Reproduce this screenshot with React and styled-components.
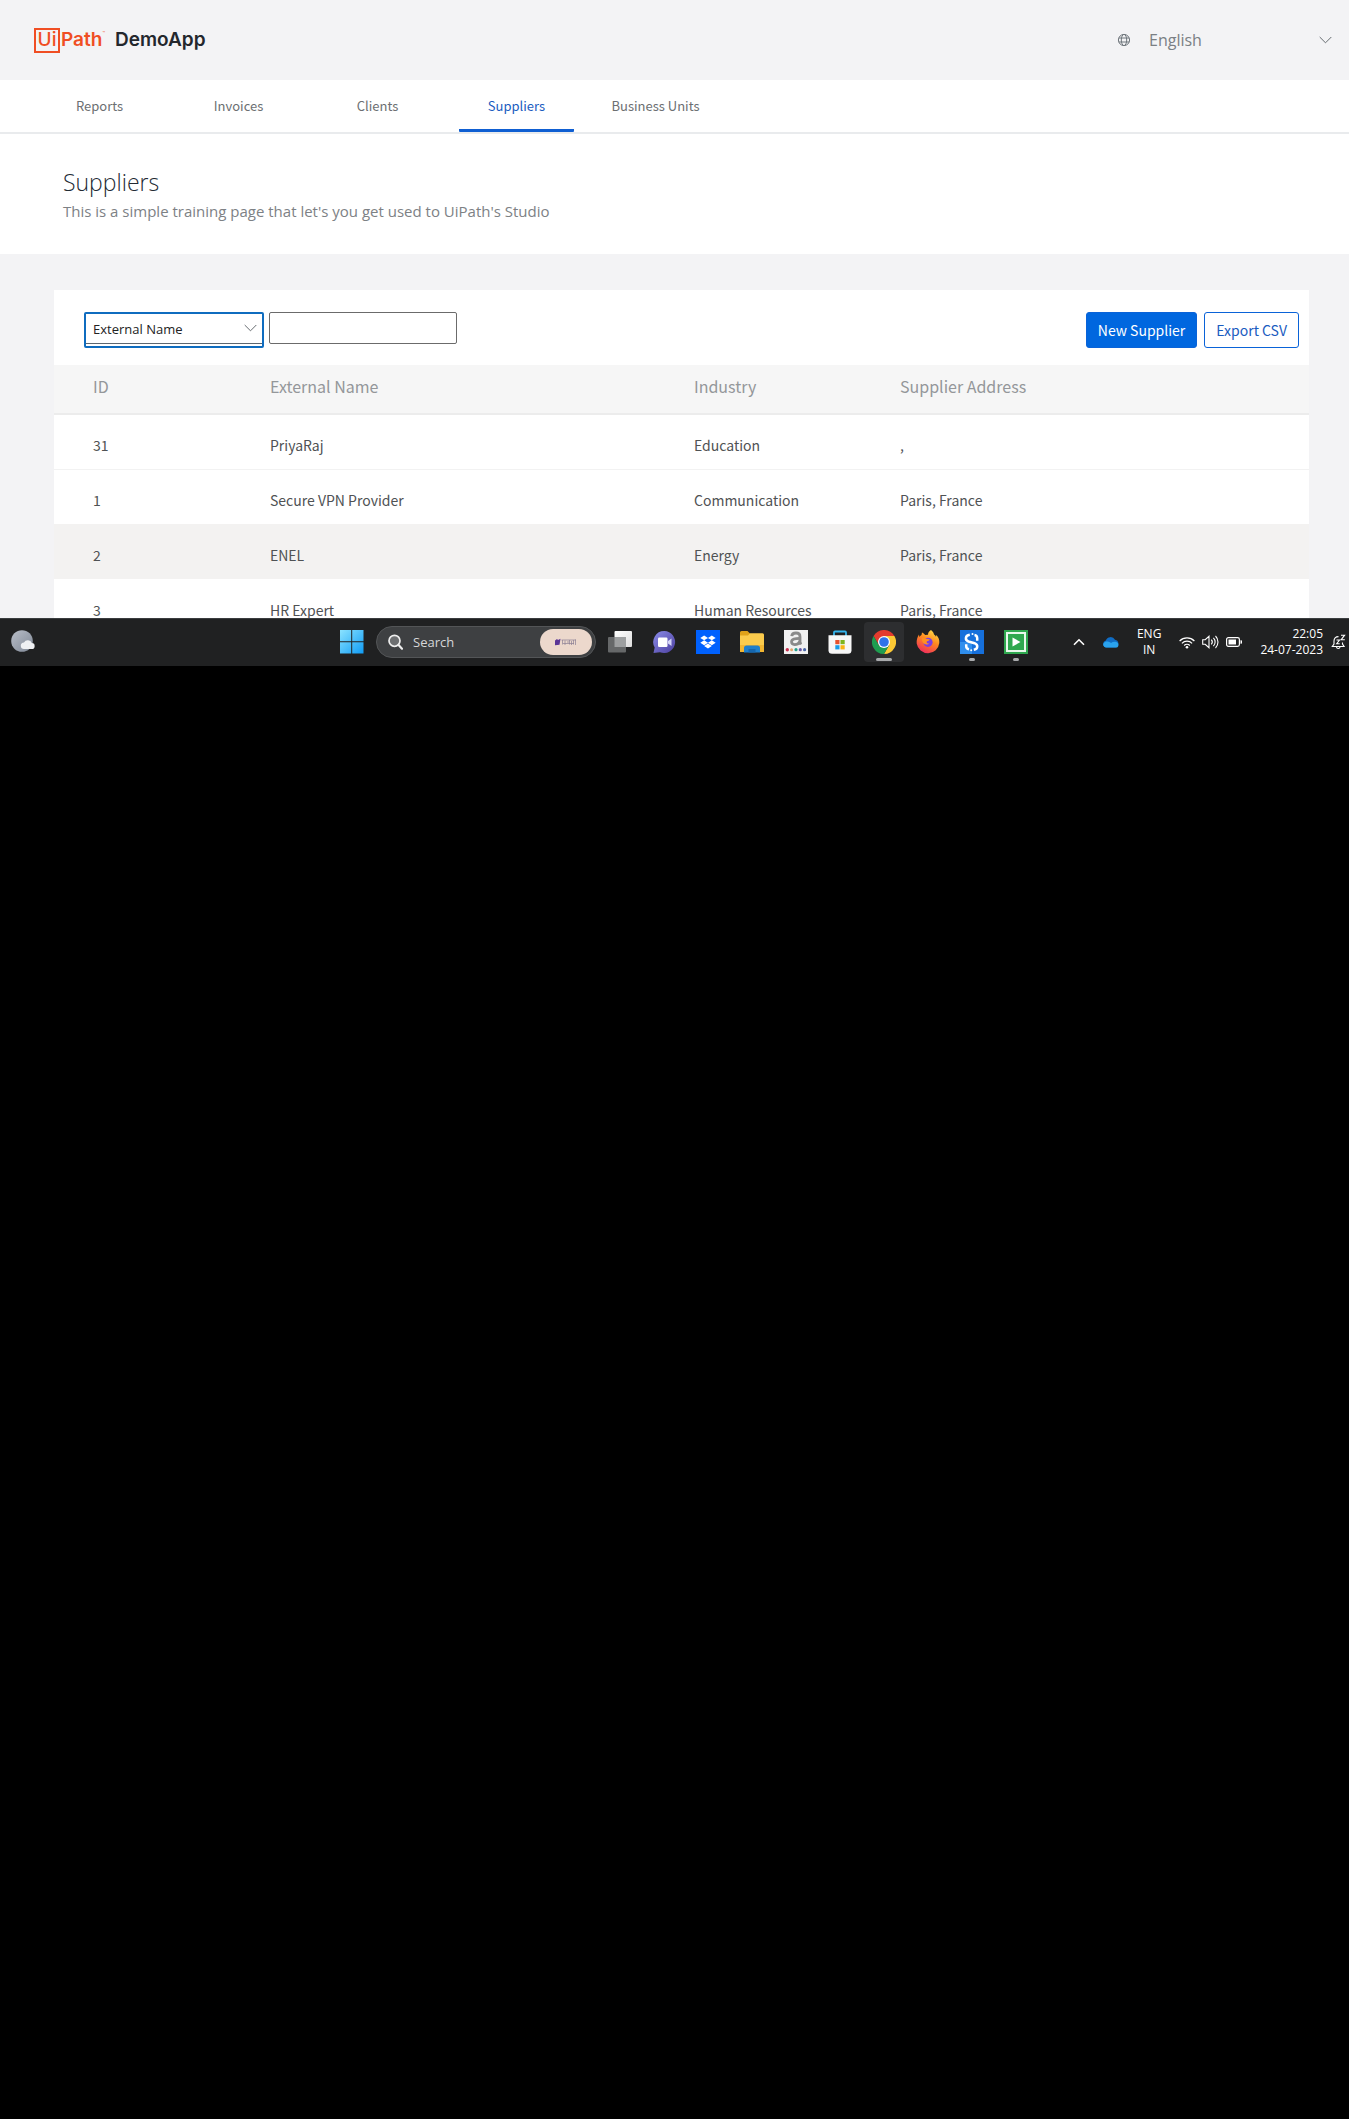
import React from "react";
import styled, { createGlobalStyle, css } from "styled-components";

const sans = `"Noto Sans CJK SC", "Noto Sans", sans-serif`;
const system = `"Open Sans", "Noto Sans", sans-serif`;

const GlobalStyle = createGlobalStyle`
  *, *::before, *::after { box-sizing: border-box; }
  html, body { margin: 0; background: #000; }
  body { font-family: ${sans}; }
`;

const Page = styled.div`
  background: #f3f3f5;
`;

const Header = styled.header`
  display: flex;
  align-items: center;
  justify-content: space-between;
  height: 80px;
  padding: 0 17px 0 34px;
`;

const Brand = styled.a`
  display: flex;
  align-items: center;
  font-family: Inter, ${sans};
  color: #23272d;
  text-decoration: none;
`;

const LogoBox = styled.span`
  display: flex;
  align-items: center;
  justify-content: center;
  width: 26px;
  height: 25px;
  border: 2px solid #f04e23;
  color: #f04e23;
  font-size: 19px;
  line-height: 20px;
  font-weight: 500;
`;

const LogoWord = styled.span`
  display: flex;
  width: 46px;
  padding-left: 1px;
  color: #f04e23;
  font-size: 19px;
  line-height: 24px;
  font-weight: 600;
`;

const TradeMark = styled.sup`
  font-size: 4px;
  line-height: 12px;
`;

const AppName = styled.span`
  margin-left: 9px;
  font-size: 19px;
  line-height: 24px;
  font-weight: 600;
`;

const Language = styled.div`
  display: flex;
  align-items: center;
  gap: 18px;
  color: #6f767c;
`;

const SelectWrap = styled.div`
  position: relative;
  display: flex;
`;

const SelectArrow = styled.svg`
  position: absolute;
  top: ${(p) => (p.$framed ? "10px" : "calc(50% - 4px)")};
  right: ${(p) => (p.$framed ? 5 : 0)}px;
  pointer-events: none;
`;

const LanguageSelect = styled.select`
  appearance: none;
  width: 183px;
  padding: 0;
  border: 0;
  background: transparent;
  color: #7a7f84;
  font: 16px/24px ${system};
`;

const Nav = styled.nav`
  display: flex;
  gap: 24px;
  height: 54px;
  padding-left: 42px;
  background: #fff;
  border-bottom: 2px solid #e9ebed;
`;

const Tab = styled.a`
  display: flex;
  align-items: center;
  justify-content: center;
  width: 115px;
  padding-top: 3px;
  border-bottom: 3px solid ${(p) => (p.$active ? "#0f5fd2" : "transparent")};
  border-radius: 1px;
  color: ${(p) => (p.$active ? "#1a5cc0" : "#6c6f72")};
  font-size: 13px;
  line-height: 20px;
  text-decoration: none;
`;

const Intro = styled.section`
  padding: 31px 63px 31px;
  background: #fff;
  font-family: ${system};
`;

const Title = styled.h1`
  margin: 0;
  color: #222a33;
  font-size: 23px;
  line-height: 34px;
  font-weight: 300;
`;

const Subtitle = styled.p`
  margin: 0;
  color: #7d8185;
  font-size: 15px;
  line-height: 24px;
`;

const Content = styled.main`
  padding: 36px 40px 0 54px;
`;

const Card = styled.section`
  background: #fff;
`;

const Toolbar = styled.div`
  display: flex;
  align-items: flex-start;
  justify-content: space-between;
  padding: 22px 10px 17px 30px;
`;

const Group = styled.div`
  display: flex;
  align-items: ${(p) => p.$align || "flex-start"};
  gap: ${(p) => p.$gap}px;
`;

const FilterFrame = styled(SelectWrap)`
  width: 180px;
  height: 36px;
  padding-bottom: 2px;
  border: 2px solid #0f6cbf;
  border-radius: 2px;
`;

const FilterSelect = styled.select`
  appearance: none;
  width: 100%;
  padding: 0 28px 0 7px;
  border: 0;
  border-bottom: 1px solid #5c6670;
  border-radius: 0;
  outline: 0;
  background: #fff;
  color: #222;
  font: 13px/24px ${system};
`;

const FilterInput = styled.input`
  width: 188px;
  height: 32px;
  padding: 0 8px;
  border: 1px solid #6b6b6b;
  border-radius: 2px;
  font: 13px/24px ${system};
`;

const Button = styled.button`
  height: 36px;
  padding: 0 11px;
  border: 1px solid #0a63d8;
  border-radius: 3px;
  background: ${(p) => (p.$primary ? "#0067df" : "#fff")};
  color: ${(p) => (p.$primary ? "#fff" : "#1a5cc0")};
  font: 14px/24px ${sans};
  white-space: nowrap;
`;

const Table = styled.table`
  width: 100%;
  table-layout: fixed;
  border-collapse: collapse;
  text-align: left;
`;

const Column = styled.col`
  width: ${(p) => (p.$width ? `${p.$width}px` : "auto")};
`;

const cell = css`
  padding: 0;
  white-space: nowrap;
  &:first-child { padding-left: 39px; }
`;

const HeadCell = styled.th`
  ${cell}
  height: 49px;
  && { padding-bottom: 7px; }
  border-bottom: 2px solid #ececec;
  background: #f6f6f6;
  color: #94979a;
  font-size: 16px;
  line-height: 24px;
  font-weight: 400;
`;

const Row = styled.tr`
  background: ${(p) => (p.$shaded ? "#f3f2f1" : "#fff")};
  border-bottom: 1px solid ${(p) => (p.$lined ? "#f2f2f2" : "transparent")};
`;

const Cell = styled.td`
  ${cell}
  height: 55px;
  padding-top: 6px;
  color: #4f5254;
  font-size: 14px;
  line-height: 24px;
`;

const Taskbar = styled.footer`
  position: relative;
  display: grid;
  grid-template-columns: 332px auto 1fr;
  align-items: center;
  height: 48px;
  margin-top: -17px;
  border-top: 1px solid #3a3d3f;
  background: #202122;
  color: #fff;
  font-family: ${system};
`;

const Widget = styled.button`
  display: flex;
  width: 40px;
  padding: 0 0 0 11px;
  border: 0;
  background: transparent;
`;

const Pins = styled.div`
  display: flex;
  align-items: center;
  gap: 4px;
`;

const Pin = styled.button`
  position: relative;
  display: flex;
  align-items: center;
  justify-content: center;
  width: 40px;
  height: 40px;
  padding: 0;
  border: 0;
  border-radius: 4px;
  background: ${(p) => (p.$mark === "active" ? "#2d2e30" : "transparent")};
  ${(p) =>
    p.$mark &&
    css`
      &::after {
        content: "";
        position: absolute;
        bottom: 1px;
        left: 50%;
        width: ${p.$mark === "active" ? 16 : 6}px;
        height: 3px;
        border-radius: 2px;
        background: #a9abad;
        transform: translateX(-50%);
      }
    `}
`;

const SearchPill = styled.label`
  display: flex;
  align-items: center;
  width: 220px;
  height: 32px;
  padding: 0 3px 0 11px;
  border: 1px solid #535557;
  border-radius: 16px;
  background: #3e4042;
`;

const SearchInput = styled.input`
  flex: 1;
  min-width: 0;
  margin-left: 10px;
  padding: 0;
  border: 0;
  outline: 0;
  background: transparent;
  color: #fff;
  font: 13px/20px ${system};
  &::placeholder { color: #d6d7d8; opacity: 1; }
`;

const Tray = styled.div`
  display: flex;
  align-items: center;
  justify-content: flex-end;
  gap: 18px;
  padding-right: 3px;
`;

const TrayText = styled.div`
  font-size: 12px;
  line-height: 16px;
  text-align: ${(p) => p.$align};
`;

const Globe = () => (
  <svg width="14" height="14" viewBox="0 0 14 14" fill="none" stroke="currentColor" strokeWidth="1">
    <circle cx="7" cy="7" r="5.6" />
    <ellipse cx="7" cy="7" rx="2.7" ry="5.6" />
    <path d="M1.9 5h10.2M1.9 9h10.2" />
  </svg>
);

const Arrow = ({ framed }) => (
  <SelectArrow $framed={framed} width="13" height="8" viewBox="0 0 13 8" fill="none" stroke="#666b70">
    <path d="M.7 1 6.5 6.8 12.3 1" />
  </SelectArrow>
);

const Weather = () => (
  <svg width="24" height="24" viewBox="0 0 24 24">
    <defs>
      <linearGradient id="moon" x1="0" y1="0" x2="1" y2="1">
        <stop offset="0" stopColor="#b9bec8" />
        <stop offset="1" stopColor="#7f8896" />
      </linearGradient>
    </defs>
    <circle cx="11" cy="11" r="10.8" fill="url(#moon)" />
    <path d="M13.2 19a3.3 3.3 0 0 1-.2-6.6 4.3 4.3 0 0 1 7.8.6 3 3 0 0 1-.3 6z" fill="#eef0f3" />
  </svg>
);

const WindowsLogo = () => (
  <svg width="24" height="24" viewBox="0 0 24 24">
    <defs>
      <linearGradient id="win" x1="0" y1="0" x2="1" y2="1">
        <stop offset="0" stopColor="#8be3ff" />
        <stop offset="1" stopColor="#109cf5" />
      </linearGradient>
    </defs>
    <path d="M0 0h11.2v11.2H0zM12.2 0h11.3v11.2H12.2zM0 12.2h11.2v11.3H0zM12.2 12.2h11.3v11.3H12.2z" fill="url(#win)" />
  </svg>
);

const Magnifier = () => (
  <svg width="15" height="16" viewBox="0 0 15 16" fill="#6d6f71" stroke="#eee" strokeWidth="1.7" strokeLinecap="round">
    <circle cx="6.5" cy="6.8" r="5.5" />
    <path d="m10.6 11 3.4 3.7" strokeWidth="2.2" />
  </svg>
);

const SearchBadge = () => (
  <svg width="52" height="26" viewBox="0 0 52 26">
    <rect width="52" height="26" rx="13" fill="#ecd8cc" />
    <path d="M15 11.5 17 10l1 1 2.5-1.3-1 6-4.5.6z" fill="#5a3596" />
    <path
      d="M21.500 11h14.500M22.500 11v4.500M25 11.500v4.500M27 13h2M29.500 11v4.500M31.500 12v4M33.500 11v4.500M35.500 10.500V16M23 14.500h11"
      fill="none"
      stroke="#8b7f93"
      strokeWidth=".7"
    />
  </svg>
);

const TaskView = () => (
  <svg width="24" height="24" viewBox="0 0 24 24">
    <defs>
      <linearGradient id="tv" x1="0" y1="0" x2="1" y2="1">
        <stop offset="0" stopColor="#fff" />
        <stop offset="1" stopColor="#ddd" />
      </linearGradient>
    </defs>
    <rect x="6.500" y="1" width="17.500" height="16" rx="1" fill="url(#tv)" />
    <rect x="0" y="7" width="18" height="15.500" rx="1" fill="#666869" />
    <path d="M6.500 7H18v10H6.500z" fill="#9d9fa0" />
  </svg>
);

const Chat = () => (
  <svg width="24" height="24" viewBox="0 0 24 24">
    <defs>
      <linearGradient id="chat" x1="0" y1="0" x2="1" y2="1">
        <stop offset="0" stopColor="#8a8be8" />
        <stop offset="1" stopColor="#4c3f9e" />
      </linearGradient>
    </defs>
    <path d="M12.500 1A11 11 0 1 1 8 22.200L1.500 23l1.200-5.500A11 11 0 0 1 12.500 1z" fill="url(#chat)" />
    <rect x="6" y="7.500" width="9.500" height="9.500" rx="1.200" fill="#fff" />
    <path d="m16 11 3.500-2.500v7.500L16 13.500z" fill="#d6d6f7" />
  </svg>
);

const Dropbox = () => (
  <svg width="24" height="24" viewBox="0 0 24 24">
    <path d="M0 0h24v24H0z" fill="#0061fe" />
    <g transform="translate(4.300 4.300) scale(.64)" fill="#fff">
      <path d="M6 1.807 0 5.629l6 3.822 6.001-3.822zM18 1.807l-6 3.822 6 3.822 6-3.822zM0 13.274l6 3.822 6.001-3.822L6 9.452zM18 9.452l-6 3.822 6 3.822 6-3.822zM6 18.371l6.001 3.822 6-3.822-6-3.822z" />
    </g>
  </svg>
);

const Folder = () => (
  <svg width="26" height="24" viewBox="0 0 26 24">
    <path d="M1 2.500A1.500 1.500 0 0 1 2.500 1h6l2.500 2.500V8H1z" fill="#e0a21a" />
    <path d="M1 5.500h8l2-2.300h12.500A1.500 1.500 0 0 1 25 4.700V22H1z" fill="#fbcb4c" />
    <path d="M1 15h24v7H1z" fill="#f2b632" />
    <path d="M5 22.500V18a2.500 2.500 0 0 1 2.500-2.500h11A2.500 2.500 0 0 1 21 18v4.500z" fill="#1f7fcb" />
    <path d="M9.500 19h7v3.500h-7z" fill="#1566ae" />
  </svg>
);

const AmazonMusic = () => (
  <svg width="24" height="24" viewBox="0 0 24 24">
    <path d="M0 0h24v24H0z" fill="#f1f1f1" />
    <path d="M7.700 6.200C8 3.800 9.800 3 12 3c2.700 0 4 1.300 4 3.700v7.800" fill="none" stroke="#8a8a8a" strokeWidth="2.800" />
    <path d="M16 8.300c-5 0-8.500.5-8.500 3.500 0 3.700 6 3.700 8 .2l1.500 2.300" fill="none" stroke="#8a8a8a" strokeWidth="2.700" />
    <circle cx="3.300" cy="19.700" r="1.700" fill="#c93050" />
    <circle cx="7.600" cy="19.700" r="1.500" fill="#e3a76c" />
    <circle cx="12" cy="19.700" r="1.600" fill="#23a18c" />
    <circle cx="16.300" cy="19.700" r="1.600" fill="#6858a8" />
    <circle cx="20.600" cy="19.700" r="1.600" fill="#4967a8" />
  </svg>
);

const Store = () => (
  <svg width="24" height="24" viewBox="0 0 24 24">
    <path d="M6 6V2.500a1 1 0 0 1 1-1h10a1 1 0 0 1 1 1V6" fill="none" stroke="#35b5ee" strokeWidth="1.800" />
    <path d="M.5 5.200h23v15a3.500 3.500 0 0 1-3.500 3.500H4a3.500 3.500 0 0 1-3.500-3.500z" fill="#f7f7f7" />
    <path d="M7.300 10h4.200v4.200H7.300z" fill="#e8512c" />
    <path d="M12.500 10h4.200v4.200h-4.200z" fill="#7db51c" />
    <path d="M7.300 15.200h4.200v4.200H7.300z" fill="#1a9ce8" />
    <path d="M12.500 15.200h4.200v4.200h-4.200z" fill="#f8b414" />
  </svg>
);

const Chrome = () => (
  <svg width="24" height="24" viewBox="0 0 24 24">
    <path d="M12 6h10.400A12 12 0 0 1 12 24l5.200-9z" fill="#fcc934" />
    <path d="M1.600 6A12 12 0 0 1 22.400 6H12v3l-5.200 6z" fill="#e33b2e" />
    <path d="M1.600 6A12 12 0 0 0 12 24l5.200-9-5.200 2-5.200-2z" fill="#1f9d50" />
    <circle cx="12" cy="12" r="6" fill="#fff" />
    <circle cx="12" cy="12" r="4.800" fill="#2f73e8" />
  </svg>
);

const Firefox = () => (
  <svg width="24" height="24" viewBox="0 0 24 24">
    <defs>
      <linearGradient id="fox" x1=".8" y1="0" x2=".3" y2="1">
        <stop offset="0" stopColor="#ffe14a" />
        <stop offset=".45" stopColor="#ff8a1f" />
        <stop offset="1" stopColor="#ef2b5d" />
      </linearGradient>
    </defs>
    <path
      d="M15 0c2 1.500 2.800 3 3 4.500 1 .5 1.700 1.300 2 2.200l.4-1.700C22.800 7.500 23.500 10 23.300 13A11.400 11.400 0 0 1 .7 13.500C.4 10 1.300 7 3 4.500L3.400 7C4 6 4.800 5.300 5.500 5L6 2.500C7.500 3.300 8.600 4 9 5l3-.3C12 2.800 13 1 15 0z"
      fill="url(#fox)"
    />
    <circle cx="12" cy="12.300" r="4.600" fill="#7b3fe0" />
    <path d="M5.500 8.500c2-.8 4-.5 5.500.5 1 .2 2 .1 2.700.2-.2 1.300-1.700 1.800-3 2.200-.4 1.300.8 2.200 2.500 2-1.200 1.800-5.700 1.400-6.700-1.600z" fill="#ff8f22" />
  </svg>
);

const StudioIcon = () => (
  <svg width="24" height="24" viewBox="0 0 24 24" fill="none" stroke="#fff" strokeWidth="2.500">
    <path d="M0 0h24v24H0z" fill="#1670dc" stroke="none" />
    <path d="M0 12h12v12H0z" fill="#2f8eed" stroke="none" />
    <path d="M9.800 4.800C5 5.500 4.700 10.200 8.500 11.500L14.500 13.200C18.500 14.800 18 19 13.800 19.800" />
    <path d="M17.200 10.800V8a3.200 3.200 0 0 0-2.700-2.900M6.200 14.200V16a3.300 3.300 0 0 0 2.800 3.300" />
    <circle cx="12.500" cy="4" r="1" fill="#fff" stroke="none" />
    <circle cx="11.200" cy="20.200" r="1" fill="#fff" stroke="none" />
  </svg>
);

const AssistantIcon = () => (
  <svg width="24" height="24" viewBox="0 0 24 24">
    <path d="M0 0h24v24H0z" fill="#2fa84f" />
    <rect x="3" y="3" width="18" height="18" fill="none" stroke="#e9f8ec" strokeWidth="2" />
    <path d="m8.500 7.500 8 4.500-8 4.500z" fill="#fff" />
  </svg>
);

const ChevronUp = () => (
  <svg width="12" height="8" viewBox="0 0 12 8" fill="none" stroke="#fff" strokeWidth="1.600">
    <path d="m1 6.800 5-5 5 5" />
  </svg>
);

const Cloud = () => (
  <svg width="16" height="12" viewBox="0 0 16 12">
    <path d="M3.500 11.500A3.500 3.500 0 0 1 2.800 4.600 5 5 0 0 1 12 3.800a4 4 0 0 1 .8 7.700z" fill="#0f6cc4" />
    <path d="M3 11.500a2.800 2.800 0 0 1-2-4.700c2-2 5-1.200 7 .2 2-1.500 5-1.700 7 .2.900 1.500.5 4.300-2 4.300z" fill="#2aa3ee" />
  </svg>
);

const Wifi = () => (
  <svg width="16" height="13" viewBox="0 0 16 13" fill="none" stroke="#fff" strokeWidth="1.200">
    <path d="M.6 5a10.400 10.400 0 0 1 14.800 0M2.900 7.300a7.200 7.200 0 0 1 10.200 0M5.200 9.500a4 4 0 0 1 5.600 0" />
    <circle cx="8" cy="11.300" r="1.300" fill="#fff" stroke="none" />
  </svg>
);

const Volume = () => (
  <svg width="17" height="14" viewBox="0 0 17 14" fill="none" stroke="#fff" strokeWidth="1.100">
    <path d="M.7 4.700v4.600h2.500L7 12.700V1.300L3.200 4.700zM9.300 4.700a3.400 3.400 0 0 1 0 4.600M11.400 2.800a6 6 0 0 1 0 8.400M13.500 1a8.500 8.500 0 0 1 0 12" />
  </svg>
);

const Battery = () => (
  <svg width="16" height="10" viewBox="0 0 16 10">
    <rect x=".6" y=".6" width="12.800" height="8.800" rx="1.800" fill="none" stroke="#fff" strokeWidth="1.200" />
    <rect x="2.500" y="2.500" width="7.500" height="5" fill="#fff" />
    <path d="M14.500 3.200h.7a.8.800 0 0 1 .8.800v2a.8.800 0 0 1-.8.800h-.7z" fill="#fff" />
  </svg>
);

const SnoozeBell = () => (
  <svg width="15" height="16" viewBox="0 0 15 16" fill="none" stroke="#fff" strokeWidth="1.100">
    <path d="M7.500 2.600C4.500 2.600 3 4.600 3 7v3L1.300 12.500h11.800L11.500 10V8.500M5.500 13c.3 2 3.200 2 3.500 0" />
    <path d="M5.500 6h3L5.700 9.700h3M10 1.200h3.600L10.200 5.700h3.600" />
  </svg>
);

const tabs = ["Reports", "Invoices", "Clients", "Suppliers", "Business Units"];

const suppliers = [
  { id: 31, name: "PriyaRaj", industry: "Education", address: ",", lined: true },
  { id: 1, name: "Secure VPN Provider", industry: "Communication", address: "Paris, France" },
  { id: 2, name: "ENEL", industry: "Energy", address: "Paris, France", shaded: true },
  { id: 3, name: "HR Expert", industry: "Human Resources", address: "Paris, France" },
];

const pins = [
  ["Task view", TaskView],
  ["Chat", Chat],
  ["Dropbox", Dropbox],
  ["File Explorer", Folder],
  ["Amazon", AmazonMusic],
  ["Microsoft Store", Store],
  ["Google Chrome", Chrome, "active"],
  ["Firefox", Firefox],
  ["UiPath Studio", StudioIcon, "open"],
  ["UiPath Assistant", AssistantIcon, "open"],
];

export default function App() {
  return (
    <>
      <GlobalStyle />
      <Page>
        <Header>
          <Brand href="#">
            <LogoBox>Ui</LogoBox>
            <LogoWord>
              Path<TradeMark>™</TradeMark>
            </LogoWord>
            <AppName>DemoApp</AppName>
          </Brand>
          <Language>
            <Globe />
            <SelectWrap>
              <LanguageSelect aria-label="Language">
                <option>English</option>
              </LanguageSelect>
              <Arrow />
            </SelectWrap>
          </Language>
        </Header>
        <Nav>
          {tabs.map((tab) => (
            <Tab key={tab} href="#" $active={tab === "Suppliers"}>
              {tab}
            </Tab>
          ))}
        </Nav>
        <Intro>
          <Title>Suppliers</Title>
          <Subtitle>This is a simple training page that let's you get used to UiPath's Studio</Subtitle>
        </Intro>
        <Content>
          <Card>
            <Toolbar>
              <Group $gap={5}>
                <FilterFrame>
                  <FilterSelect aria-label="Filter column">
                    <option>External Name</option>
                  </FilterSelect>
                  <Arrow framed />
                </FilterFrame>
                <FilterInput type="text" aria-label="Filter value" />
              </Group>
              <Group $gap={7}>
                <Button $primary>New Supplier</Button>
                <Button>Export CSV</Button>
              </Group>
            </Toolbar>
            <Table>
              <colgroup>
                <Column $width={216} />
                <Column $width={424} />
                <Column $width={206} />
                <Column />
              </colgroup>
              <thead>
                <tr>
                  <HeadCell>ID</HeadCell>
                  <HeadCell>External Name</HeadCell>
                  <HeadCell>Industry</HeadCell>
                  <HeadCell>Supplier Address</HeadCell>
                </tr>
              </thead>
              <tbody>
                {suppliers.map((s) => (
                  <Row key={s.id} $shaded={s.shaded} $lined={s.lined}>
                    <Cell>{s.id}</Cell>
                    <Cell>{s.name}</Cell>
                    <Cell>{s.industry}</Cell>
                    <Cell>{s.address}</Cell>
                  </Row>
                ))}
              </tbody>
            </Table>
          </Card>
        </Content>
      </Page>
      <Taskbar>
        <Widget aria-label="Weather">
          <Weather />
        </Widget>
        <Pins>
          <Pin aria-label="Start">
            <WindowsLogo />
          </Pin>
          <SearchPill>
            <Magnifier />
            <SearchInput type="text" placeholder="Search" aria-label="Search" />
            <SearchBadge />
          </SearchPill>
          {pins.map(([label, Icon, mark]) => (
            <Pin key={label} aria-label={label} $mark={mark}>
              <Icon />
            </Pin>
          ))}
        </Pins>
        <Tray>
          <ChevronUp />
          <Cloud />
          <TrayText $align="center">
            ENG
            <br />
            IN
          </TrayText>
          <Group $gap={7} $align="center">
            <Wifi />
            <Volume />
            <Battery />
          </Group>
          <Group $gap={8} $align="center">
            <TrayText $align="right">
              22:05
              <br />
              24-07-2023
            </TrayText>
            <SnoozeBell />
          </Group>
        </Tray>
      </Taskbar>
    </>
  );
}
